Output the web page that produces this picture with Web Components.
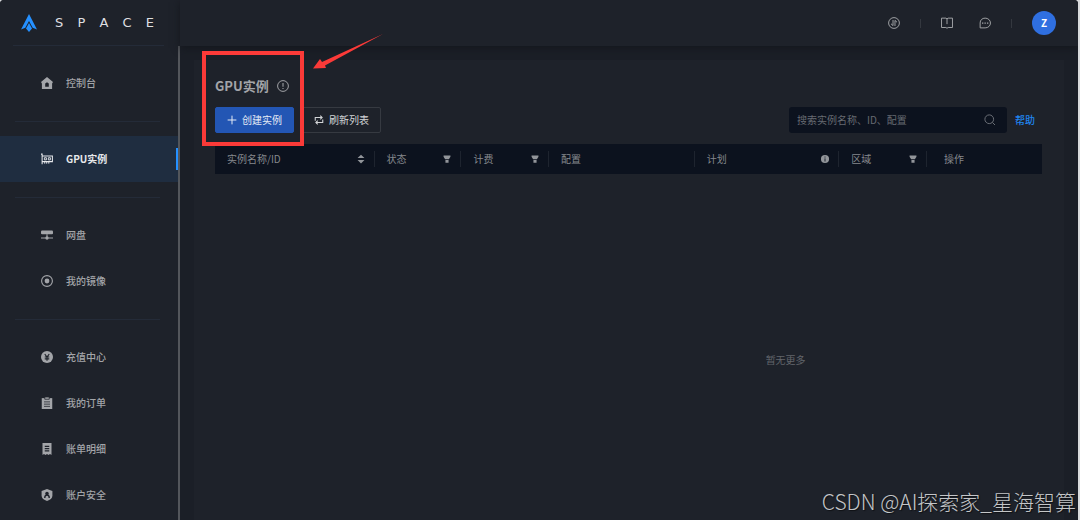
<!DOCTYPE html>
<html lang="zh-CN">
<head>
<meta charset="utf-8">
<title>GPU实例</title>
<style>
	html, body {
		height: 100%;
		margin: 0;
	}

	body {
		background: #d9dbdd;
		color: #a3a5a9;
		font: 10px/16px "Noto Sans CJK SC", "Noto Sans", sans-serif;
		overflow: hidden;
	}
</style>
</head>
<body>
<space-app></space-app>

<script>
const icons = {
	home: `<path fill="currentColor" fill-rule="evenodd" d="M8 0 16 6.500 14.800 8.500V16H1.200V8.500L0 6.500ZM5.600 8.500v4.500h4.800V8.500L8 7Z"/>`,
	gpu: `<path fill="none" stroke="currentColor" stroke-width="1.400" d="M0 1.500h1.500V15M1.500 4h13.700v7.500H1.500"/><path fill="none" stroke="currentColor" stroke-width="1.200" d="M4.500 6.300h2.700v2.900H4.500zM9.800 6.300h2.700v2.900H9.800z"/><path stroke="currentColor" stroke-width="1.600" stroke-dasharray="1.500 1" d="M4 13.200h8"/>`,
	disk: `<rect x="0" y="2" width="16" height="5" rx="1.500" fill="currentColor"/><path stroke="currentColor" stroke-width="1.400" d="M8 7v4M0 12h16"/><circle cx="8" cy="12" r="2.200" fill="currentColor"/>`,
	image: `<circle cx="8" cy="8" r="7.200" fill="none" stroke="currentColor" stroke-width="1.500"/><circle cx="8" cy="8" r="3.200" fill="currentColor"/>`,
	money: `<circle cx="8" cy="8" r="8" fill="currentColor"/><path fill="none" stroke="#1e222a" stroke-width="1.500" d="m5 4 3 4 3-4M8 7.500V13M5 8h6M5 10.500h6"/>`,
	order: `<path fill="currentColor" d="M1 1.500h14V16H1z"/><path fill="currentColor" stroke="#1e222a" d="M5 0h6v3H5z"/><path stroke="#1e222a" stroke-width="1" d="M4 6.500h8M4 9.500h8M4 12.500h8"/>`,
	bill: `<path fill="currentColor" d="M2 0h12v16l-2-1.500-2 1.500-2-1.500L6 16l-2-1.500L2 16z"/><path stroke="#1e222a" stroke-width="1.400" d="M5 4.500h6M5 7.500h6M5 10.500h6"/>`,
	shield: `<path fill="currentColor" d="m8 0 7.200 2.500V9c0 3.500-3 5.500-7.200 7-4.200-1.500-7.200-3.500-7.200-7V2.500z"/><circle cx="8" cy="6" r="2.300" fill="#1e222a"/><path fill="none" stroke="#1e222a" stroke-width="1.800" d="M5 12c0-3 1-4 3-4s3 1 3 4"/>`,
	transfer: `<circle cx="8" cy="8" r="7.200" fill="none" stroke="currentColor" stroke-width="1.300"/><path fill="none" stroke="currentColor" stroke-width="1.300" d="M6.700 4v7.500L4 9M9.300 12V4.500L12 7"/>`,
	book: `<path fill="none" stroke="currentColor" stroke-width="1.300" d="M.7 1.500h5.800L8 2.500l1.500-1h5.800v12.500H9.500l-1.500 1-1.500-1H.7zM8 2.500v7"/>`,
	chat: `<path fill="none" stroke="currentColor" stroke-width="1.300" d="M1.500 14.500V8C1.500 4 4.300 1.500 8.200 1.500S15.300 4.300 15.300 8s-3 6.500-7.100 6.500z"/><path fill="currentColor" d="M4 7.200h1.800V9H4zM7.300 7.200h1.800V9H7.300zM10.600 7.200h1.800V9h-1.800z"/>`,
	notice: `<circle cx="8" cy="8" r="7.200" fill="none" stroke="currentColor" stroke-width="1.300"/><path stroke="currentColor" stroke-width="1.400" d="M8 4v5M8 10.500V12"/>`,
	plus: `<path stroke="currentColor" stroke-width="1.600" d="M8 1v14M1 8h14"/>`,
	refresh: `<path fill="none" stroke="currentColor" stroke-width="1.700" d="M2 9V4h11M10 1l3 3-3 3M14 7v5H3M6 15l-3-3 3-3"/>`,
	search: `<circle cx="7" cy="7" r="5.800" fill="none" stroke="currentColor" stroke-width="1.300"/><path stroke="currentColor" stroke-width="1.300" d="m11.200 11.200 3.500 3.500"/>`,
	sort: `<path fill="currentColor" d="m8 1 5.500 5.500h-11zM8 15 2.500 9.500h11z"/>`,
	filter: `<path fill="currentColor" d="M2.500 2.500h11v2L11 8.500H5L2.500 4.500zM5.500 9.500h5V14h-5z"/>`,
	info: `<circle cx="8" cy="8" r="6.500" fill="currentColor"/><path stroke="#0c121e" stroke-width="1.400" d="M8 4v1.700M8 7v5"/>`
};

class SpaceIcon extends HTMLElement {
	constructor() {
		super();
		this.attachShadow({ mode: "open" });
	}

	connectedCallback() {
		this.shadowRoot.innerHTML = `
		<style>
		:host {
			display: block;
			flex: none;
			width: 12px;
			height: 12px;
		}

		svg {
			display: block;
			width: 100%;
			height: 100%;
		}
		</style>
		<svg viewBox="0 0 16 16" aria-hidden="true">${icons[this.getAttribute("name")]}</svg>
		`;
	}
}

class SpaceLogo extends HTMLElement {
	constructor() {
		super();
		this.attachShadow({ mode: "open" });
	}

	connectedCallback() {
		this.shadowRoot.innerHTML = `
		<style>
		:host {
			display: flex;
			align-items: center;
			gap: 18px;
			height: 46px;
			margin: 0 16px 0 13px;
			padding: 0 10px 0 8px;
			box-sizing: border-box;
			border-bottom: 1px solid #242b38;
			color: #dedfe1;
		}

		svg {
			flex: none;
			width: 16px;
			height: 18px;
		}

		.word {
			flex: 1;
			display: flex;
			justify-content: space-between;
			font: 13px/16px "DejaVu Sans", sans-serif;
		}
		</style>
		<svg viewBox="0 0 16 18" aria-hidden="true">
			<path fill="#2590ff" d="M8 0 16 15.500l-4.300-1.800L8 7l-3.700 6.700L0 15.500z"/>
			<path fill="#2590ff" d="m8 9 3 5.500L8 18l-3-3.500z"/>
		</svg>
		<div class="word"><span>S</span><span>P</span><span>A</span><span>C</span><span>E</span></div>
		`;
	}
}

class NavItem extends HTMLElement {
	constructor() {
		super();
		this.attachShadow({ mode: "open" });
	}

	connectedCallback() {
		this.shadowRoot.innerHTML = `
		<style>
		:host {
			display: block;
		}

		a {
			display: flex;
			align-items: center;
			gap: 13px;
			height: 46px;
			padding-left: 41px;
			color: inherit;
			font-weight: 500;
			text-decoration: none;
		}

		:host([active]) a {
			background: linear-gradient(#2590ff, #2590ff) right center / 2px 22px no-repeat #1f2d40;
			color: #e6e8eb;
			font-weight: 700;
		}
		</style>
		<a href="#"><space-icon name="${this.getAttribute("icon")}"></space-icon><slot></slot></a>
		`;
	}
}

class SideNav extends HTMLElement {
	constructor() {
		super();
		this.attachShadow({ mode: "open" });
	}

	connectedCallback() {
		this.shadowRoot.innerHTML = `
		<style>
		:host {
			display: flex;
			flex-direction: column;
			flex: none;
			width: 180px;
			background: #1e222a;
		}

		nav {
			flex: 1;
			min-height: 0;
			padding-top: 14px;
			overflow: hidden;
			border-right: 2px solid #53565b;
		}

		hr {
			height: 1px;
			margin: 15px 18px 14px 15px;
			border: 0;
			background: #242b38;
		}
		</style>
		<space-logo></space-logo>
		<nav>
			<nav-item icon="home">控制台</nav-item>
			<hr>
			<nav-item icon="gpu" active>GPU实例</nav-item>
			<hr>
			<nav-item icon="disk">网盘</nav-item>
			<nav-item icon="image">我的镜像</nav-item>
			<hr>
			<nav-item icon="money">充值中心</nav-item>
			<nav-item icon="order">我的订单</nav-item>
			<nav-item icon="bill">账单明细</nav-item>
			<nav-item icon="shield">账户安全</nav-item>
		</nav>
		`;
	}
}

class TopBar extends HTMLElement {
	constructor() {
		super();
		this.attachShadow({ mode: "open" });
	}

	connectedCallback() {
		this.shadowRoot.innerHTML = `
		<style>
		:host {
			display: flex;
			align-items: center;
			justify-content: flex-end;
			gap: 20px;
			height: 46px;
			padding-right: 22px;
			background: #1e222a;
			box-shadow: 0 2px 8px #14171d;
			z-index: 1;
		}

		button {
			padding: 0;
			border: 0;
			background: none;
			color: #a0a2a6;
			font: inherit;
		}

		i {
			width: 1px;
			height: 9px;
			background: #34383f;
		}

		.chat {
			margin-left: 6px;
		}

		.avatar {
			width: 24px;
			height: 24px;
			border-radius: 50%;
			background: #2f6fe0;
			color: #fff;
			font-weight: 700;
		}
		</style>
		<button aria-label="传输"><space-icon name="transfer"></space-icon></button>
		<i></i>
		<button aria-label="文档"><space-icon name="book"></space-icon></button>
		<button class="chat" aria-label="消息"><space-icon name="chat"></space-icon></button>
		<i></i>
		<button class="avatar">Z</button>
		`;
	}
}

class SpaceButton extends HTMLElement {
	constructor() {
		super();
		this.attachShadow({ mode: "open" });
	}

	connectedCallback() {
		this.shadowRoot.innerHTML = `
		<style>
		:host {
			display: block;
		}

		button {
			display: flex;
			align-items: center;
			gap: 5px;
			height: 26px;
			padding: 0 11px;
			border: 1px solid #363a41;
			border-radius: 2px;
			background: none;
			color: #d2d4d6;
			font: inherit;
		}

		space-icon {
			width: 10px;
			height: 10px;
		}

		:host([primary]) button {
			border-color: #2356b4;
			background: #2356b4;
			color: #e4eaf5;
		}
		</style>
		<button><space-icon name="${this.getAttribute("icon")}"></space-icon><slot></slot></button>
		`;
	}
}

class SearchField extends HTMLElement {
	constructor() {
		super();
		this.attachShadow({ mode: "open" });
	}

	connectedCallback() {
		this.shadowRoot.innerHTML = `
		<style>
		:host {
			display: flex;
			align-items: center;
			width: 218px;
			height: 26px;
			padding: 0 11px 0 8px;
			box-sizing: border-box;
			border-radius: 3px;
			background: #0c121e;
			color: #6d7178;
		}

		input {
			flex: 1;
			min-width: 0;
			padding: 0;
			border: 0;
			outline: 0;
			background: none;
			color: #a3a5a9;
			font: inherit;
		}

		input::placeholder {
			color: #666a71;
		}
		</style>
		<input type="text" aria-label="搜索" placeholder="搜索实例名称、ID、配置">
		<space-icon name="search"></space-icon>
		`;
	}
}

class InstanceTable extends HTMLElement {
	constructor() {
		super();
		this.attachShadow({ mode: "open" });
	}

	connectedCallback() {
		const columns = [
			["实例名称/ID", "sort", 19.3],
			["状态", "filter", 10.5],
			["计费", "filter", 10.6],
			["配置", "", 17.6],
			["计划", "info", 17.5],
			["区域", "filter", 10.6],
			["操作", "", 13.9]
		];

		this.shadowRoot.innerHTML = `
		<style>
		:host {
			display: block;
			overflow: hidden;
		}

		table {
			width: 100%;
			table-layout: fixed;
			border-collapse: collapse;
			background: #0c121e;
		}

		th {
			height: 30px;
			padding: 0;
			color: #85888d;
			font-weight: 400;
		}

		th div {
			display: flex;
			align-items: center;
			justify-content: space-between;
			height: 16px;
			padding: 0 8px 0 12px;
			border-right: 1px solid #1e242f;
		}

		th:last-child div {
			padding-left: 17px;
			border: 0;
		}

		space-icon {
			width: 10px;
			height: 10px;
			color: #92959a;
		}

		.empty {
			width: 138%;
			padding-top: 178px;
			color: #62656b;
			text-align: center;
		}
		</style>
		<table>
			<colgroup>${columns.map(([, , width]) => `<col style="width: ${width}%">`).join("")}</colgroup>
			<thead>
				<tr>${columns.map(([label, icon]) => `<th scope="col"><div>${label}${icon ? `<space-icon name="${icon}"></space-icon>` : ""}</div></th>`).join("")}</tr>
			</thead>
		</table>
		<div class="empty">暂无更多</div>
		`;
	}
}

class InstancePage extends HTMLElement {
	constructor() {
		super();
		this.attachShadow({ mode: "open" });
	}

	connectedCallback() {
		this.shadowRoot.innerHTML = `
		<style>
		:host {
			display: block;
			flex: 1;
			margin: 14px 14px 0;
			padding: 16px 22px 0 21px;
			background: #1e222a;
		}

		.title {
			display: flex;
			align-items: center;
			gap: 8px;
			margin-bottom: 11px;
		}

		h1 {
			margin: 0;
			font-size: 13px;
			line-height: 20px;
		}

		.tools {
			display: flex;
			align-items: center;
			gap: 8px;
			margin-bottom: 11px;
		}

		search-field {
			margin-left: auto;
		}

		a {
			margin-right: 7px;
			color: #2085f0;
			font-weight: 500;
			text-decoration: none;
		}
		</style>
		<div class="title">
			<h1>GPU实例</h1>
			<space-icon name="notice"></space-icon>
		</div>
		<div class="tools">
			<space-button icon="plus" primary>创建实例</space-button>
			<space-button icon="refresh">刷新列表</space-button>
			<search-field></search-field>
			<a href="#">帮助</a>
		</div>
		<instance-table></instance-table>
		`;
	}
}

class GuideMark extends HTMLElement {
	constructor() {
		super();
		this.attachShadow({ mode: "open" });
	}

	connectedCallback() {
		this.shadowRoot.innerHTML = `
		<style>
		:host {
			position: absolute;
			left: 202px;
			top: 34px;
			z-index: 2;
			pointer-events: none;
		}

		svg {
			display: block;
		}
		</style>
		<svg width="184" height="114" viewBox="0 0 184 114" aria-hidden="true">
			<rect x="2" y="19" width="98" height="91" fill="none" stroke="#fb3a38" stroke-width="4"/>
			<path fill="#fb3a38" d="M181 0 120 28 118 25 111 34.500 124 34 123 31.500z"/>
		</svg>
		`;
	}
}

class SpaceApp extends HTMLElement {
	constructor() {
		super();
		this.attachShadow({ mode: "open" });
	}

	connectedCallback() {
		this.shadowRoot.innerHTML = `
		<style>
		:host {
			display: flex;
			height: 100%;
			margin-right: 2px;
			box-sizing: border-box;
			overflow: hidden;
			border-radius: 4px 4px 0 0;
			background: #1b1f27;
		}

		main {
			display: flex;
			flex-direction: column;
			flex: 1;
			min-width: 0;
		}

		.watermark {
			position: absolute;
			right: 4px;
			bottom: 5px;
			color: #c4c6c8;
			font-size: 21px;
			font-weight: 300;
			line-height: 28px;
			text-shadow: 1px 1px 1px #0008;
			z-index: 2;
		}
		</style>
		<side-nav></side-nav>
		<main>
			<top-bar></top-bar>
			<instance-page></instance-page>
		</main>
		<guide-mark></guide-mark>
		<div class="watermark">CSDN @AI探索家_星海智算</div>
		`;
	}
}

customElements.define("space-icon", SpaceIcon);
customElements.define("space-logo", SpaceLogo);
customElements.define("nav-item", NavItem);
customElements.define("side-nav", SideNav);
customElements.define("top-bar", TopBar);
customElements.define("space-button", SpaceButton);
customElements.define("search-field", SearchField);
customElements.define("instance-table", InstanceTable);
customElements.define("instance-page", InstancePage);
customElements.define("guide-mark", GuideMark);
customElements.define("space-app", SpaceApp);
</script>
</body>
</html>
